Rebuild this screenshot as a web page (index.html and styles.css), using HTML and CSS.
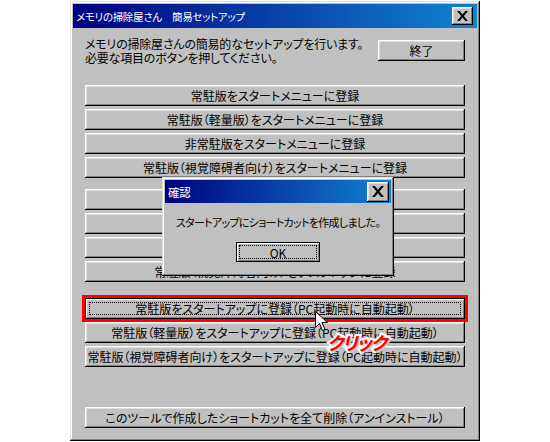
FILE: index.html
```html
<!DOCTYPE html>
<html lang="ja">
<head>
    <meta charset="UTF-8">
    <title>メモリの掃除屋さん 簡易セットアップ</title>
    <link rel="stylesheet" href="styles.css">
</head>
<body>
    <div class="window">
        <div class="titlebar">
            <span class="title">メモリの掃除屋さん　簡易セットアップ</span>
            <span class="close">
                <svg width="11" height="10" viewBox="0 0 11 10"><path d="M0 0h2.6l2.9 3.4 2.9-3.4h2.6l-4.2 5 4.2 5h-2.6l-2.9-3.4-2.9 3.4h-2.6l4.2-5z" fill="#000"/></svg>
            </span>
        </div>
        <div class="client">
            <div class="header">
                <p class="intro">メモリの掃除屋さんの簡易的なセットアップを行います。<br>必要な項目のボタンを押してください。</p>
                <div class="btn quit">終了</div>
            </div>
            <div class="group">
                <div class="btn">常駐版をスタートメニューに登録</div>
                <div class="btn">常駐版（軽量版）をスタートメニューに登録</div>
                <div class="btn">非常駐版をスタートメニューに登録</div>
                <div class="btn">常駐版（視覚障碍者向け）をスタートメニューに登録</div>
            </div>
            <div class="group second">
                <div class="btn">常駐版をデスクトップに登録</div>
                <div class="btn">常駐版（軽量版）をデスクトップに登録</div>
                <div class="btn">非常駐版をデスクトップに登録</div>
                <div class="btn">常駐版（視覚障碍者向け）をデスクトップに登録</div>
            </div>
            <div class="group third">
                <div class="btn default marked">常駐版をスタートアップに登録（PC起動時に自動起動）</div>
                <div class="btn">常駐版（軽量版）をスタートアップに登録（PC起動時に自動起動）</div>
                <div class="btn">常駐版（視覚障碍者向け）をスタートアップに登録（PC起動時に自動起動）</div>
            </div>
            <div class="group last">
                <div class="btn">このツールで作成したショートカットを全て削除（アンインストール）</div>
            </div>
        </div>

        <div class="dialog">
            <div class="titlebar small">
                <span class="title">確認</span>
                <span class="close big">
                    <svg width="12" height="11" viewBox="0 0 11 10"><path d="M0 0h2.6l2.9 3.4 2.9-3.4h2.6l-4.2 5 4.2 5h-2.6l-2.9-3.4-2.9 3.4h-2.6l4.2-5z" fill="#000"/></svg>
                </span>
            </div>
            <p class="message">スタートアップにショートカットを作成しました。</p>
            <div class="btn default ok">OK</div>
        </div>

        <svg class="cursor" width="13" height="21" viewBox="0 0 13 21">
            <path d="M0.5 0.5v16l4-4 3 7 2.5-1-3-7h5.5z" fill="#fff" stroke="#000" stroke-width="1"/>
        </svg>
        <span class="click">クリック</span>
    </div>
</body>
</html>
```

FILE: styles.css
```css
body {
    margin: 0;
    background: #fff;
    font-family: "Noto Sans CJK JP", "Noto Sans", sans-serif;
    font-size: 12px;
    font-feature-settings: "palt";
    color: #000;
}
.window {
    position: relative;
    box-sizing: border-box;
    width: 410px;
    height: 440px;
    margin: 1px 0 0 70px;
    padding: 3px;
    background: #c0c0c0;
    box-shadow: inset -1px -1px #000, inset 1px 1px #dfdfdf, inset -2px -2px #808080, inset 2px 2px #fff;
}
.titlebar {
    height: 24px;
    display: flex;
    align-items: center;
    justify-content: space-between;
    padding: 0 4px 0 3px;
    background: linear-gradient(to right, #000080, #1084d0);
    color: #fff;
}
.titlebar.small { height: 23px; padding-right: 2px; }
.title { font-size: 10.5px; letter-spacing: -0.3px; }
.titlebar.small .title { font-size: 11.5px; }
.close {
    width: 21px;
    height: 18px;
    display: flex;
    align-items: center;
    justify-content: center;
    background: #c0c0c0;
    box-shadow: inset -1px -1px #000, inset 1px 1px #fff, inset -2px -2px #808080, inset 2px 2px #dfdfdf;
}
.close.big { width: 22px; height: 20px; }
.client { padding: 9px 12px 0; }
.header {
    display: flex;
    justify-content: space-between;
    align-items: flex-start;
    height: 48px;
}
.intro { margin: 0; line-height: 14px; letter-spacing: -0.2px; }
.btn {
    position: relative;
    box-sizing: border-box;
    height: 21px;
    display: flex;
    align-items: center;
    justify-content: center;
    white-space: nowrap;
    background: #c0c0c0;
    box-shadow: inset -1px -1px #000, inset 1px 1px #fff, inset -2px -2px #808080, inset 2px 2px #dfdfdf;
}
.btn.quit { width: 87px; margin-top: 3px; }
.btn.default {
    box-shadow: inset 0 0 0 1px #000, inset 2px 2px #fff, inset -2px -2px #808080;
}
.btn.default::after {
    content: "";
    position: absolute;
    inset: 4px;
    border: 1px dotted #000;
}
.btn.marked { outline: 3px solid #f00; }
.group { display: flex; flex-direction: column; gap: 3px; }
.group.second { margin-top: 11px; }
.group.third { margin-top: 16px; }
.group.last { margin-top: 40px; }
.dialog {
    position: absolute;
    left: 92px;
    top: 176px;
    box-sizing: border-box;
    width: 232px;
    height: 99px;
    padding: 3px;
    background: #c0c0c0;
    box-shadow: inset -1px -1px #000, inset 1px 1px #dfdfdf, inset -2px -2px #808080, inset 2px 2px #fff;
}
.message {
    margin: 12px 0 0;
    line-height: 14px;
    font-size: 11px;
    letter-spacing: -0.7px;
    text-align: center;
    white-space: nowrap;
}
.btn.ok { width: 84px; height: 20px; margin: 13px auto 0; }
.btn.ok::after { inset: 3px; }
.cursor { position: absolute; left: 245px; top: 310px; }
.click {
    position: absolute;
    left: 257px;
    top: 328px;
    font-size: 18px;
    font-weight: bold;
    font-style: italic;
    letter-spacing: -1px;
    color: #f00;
    -webkit-text-stroke: 4px #fff;
    paint-order: stroke fill;
    text-shadow: 1px 1px 2px rgba(0, 0, 0, 0.4);
}
```
